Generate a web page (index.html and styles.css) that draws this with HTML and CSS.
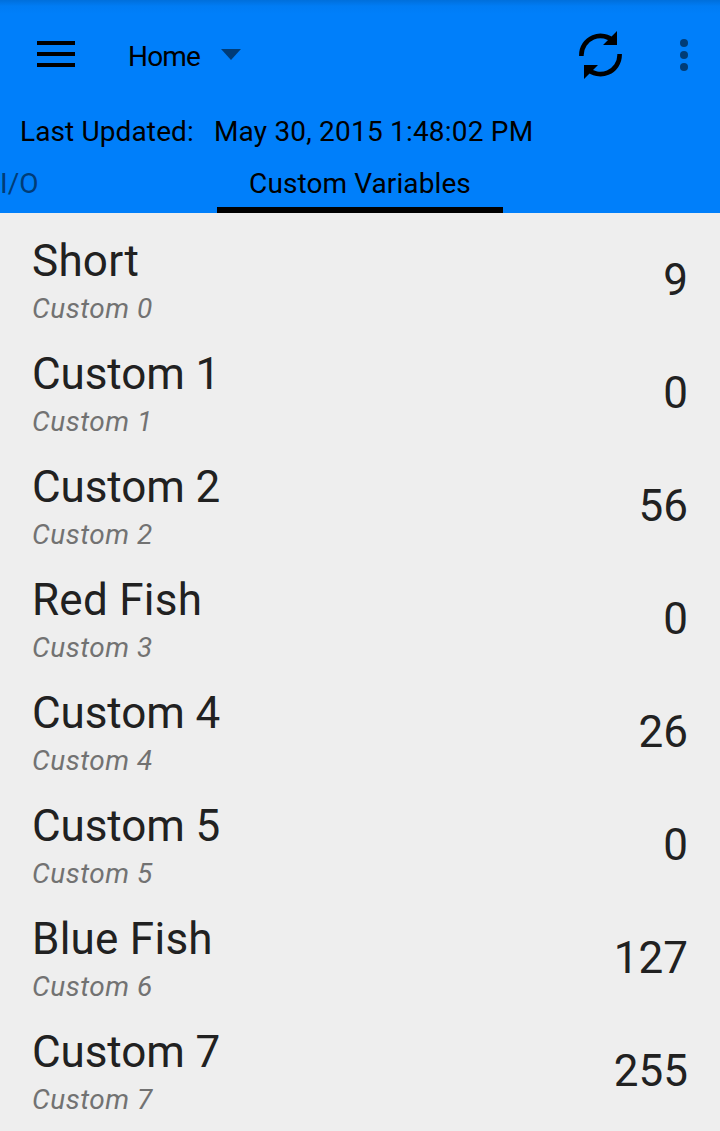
FILE: index.html
```html
<!DOCTYPE html>
<html lang="en">
<head>
<meta charset="utf-8">
<title>Custom Variables</title>
<link rel="stylesheet" href="styles.css">
</head>
<body>
<header class="header">
  <div class="toolbar">
    <svg class="menu-icon" width="38" height="26" viewBox="0 0 38 26"><path d="M0 2h38M0 13h38M0 24h38" stroke="#000" stroke-width="4"/></svg>
    <span class="location">Home</span>
    <svg class="caret" width="20" height="11" viewBox="0 0 20 11"><path d="M0 0h20L10 11z"/></svg>
    <svg class="refresh" width="44" height="50" viewBox="0 0 44 50"><path d="M3.4 27V26A19.1 19.1 0 0 1 36 12.5M41.6 25V26A19.1 19.1 0 0 1 9 39.5" fill="none" stroke="#000" stroke-width="4.6"/><path d="M39 2v14H25zM6 50V36h14z"/></svg>
    <svg class="more" width="8" height="34" viewBox="0 0 8 34"><circle cx="4" cy="6" r="4"/><circle cx="4" cy="18" r="4"/><circle cx="4" cy="30" r="4"/></svg>
  </div>
  <div class="updated"><span>Last Updated:</span><span class="date">May 30, 2015 1:48:02 PM</span></div>
  <nav class="tabs"><span class="tab-prev">I/O</span><span class="tab">Custom Variables</span></nav>
</header>
<main class="list">
  <div class="row"><div><div class="name renamed">Short</div><div class="sub">Custom 0</div></div><div class="value">9</div></div>
  <div class="row"><div><div class="name">Custom 1</div><div class="sub">Custom 1</div></div><div class="value">0</div></div>
  <div class="row"><div><div class="name">Custom 2</div><div class="sub">Custom 2</div></div><div class="value">56</div></div>
  <div class="row"><div><div class="name renamed">Red Fish</div><div class="sub">Custom 3</div></div><div class="value">0</div></div>
  <div class="row"><div><div class="name">Custom 4</div><div class="sub">Custom 4</div></div><div class="value">26</div></div>
  <div class="row"><div><div class="name">Custom 5</div><div class="sub">Custom 5</div></div><div class="value">0</div></div>
  <div class="row"><div><div class="name renamed">Blue Fish</div><div class="sub">Custom 6</div></div><div class="value">127</div></div>
  <div class="row"><div><div class="name">Custom 7</div><div class="sub">Custom 7</div></div><div class="value">255</div></div>
</main>
</body>
</html>
```
FILE: styles.css
```css
* { box-sizing: border-box; }
body { margin: 0; width: 720px; height: 1131px; overflow: hidden; background: #eee; color: #212121; font-family: Roboto, sans-serif; }
.header { height: 213px; background: linear-gradient(#006fdb, #007cf4 6px, #007ffa 14px); color: #000; font-size: 28px; }
.toolbar { height: 112px; display: flex; align-items: center; padding: 0 32px 4px 37px; }
.location { width: 72px; margin-left: 53px; padding-top: 4px; letter-spacing: -0.8px; }
.caret { margin: 1px 0 0 21px; fill: #003c77; }
.refresh { margin-left: auto; }
.more { margin-left: 58px; fill: #003c77; }
.updated { height: 40px; line-height: 39px; padding-left: 20px; display: flex; gap: 20px; letter-spacing: 0.12px; }
.date { letter-spacing: 0.2px; }
.tabs { height: 61px; display: flex; line-height: 64px; letter-spacing: 0.1px; }
.tab-prev { width: 217px; color: #003c77; }
.tab { width: 286px; text-align: center; border-bottom: 6px solid #000; }
.list { padding-top: 11px; }
.row { height: 113px; display: flex; justify-content: space-between; padding: 8px 32px 0 32px; }
.name { font-size: 44px; line-height: 58px; height: 60px; letter-spacing: -0.1px; }
.renamed { letter-spacing: 0.25px; }
.sub { font-size: 28px; line-height: 34px; font-style: italic; color: #727272; letter-spacing: 0.5px; }
.value { font-size: 44px; line-height: 96px; }
```
